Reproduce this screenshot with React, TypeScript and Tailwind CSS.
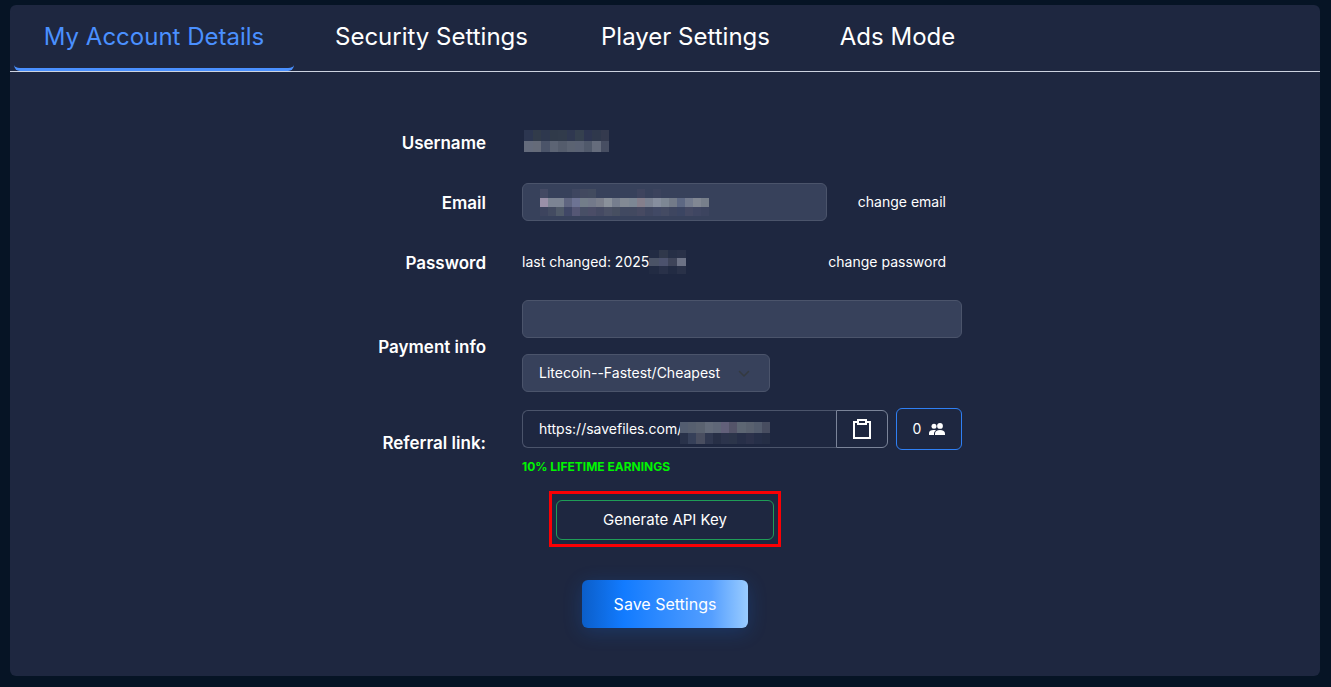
import { useState } from 'react';
import type { ReactNode } from 'react';

const tabs = [
  { name: 'My Account Details', width: 'w-[288px]' },
  { name: 'Security Settings', width: 'w-[267px]' },
  { name: 'Player Settings', width: 'w-[241px]' },
  { name: 'Ads Mode', width: 'w-[183px]' },
];

function Mosaic({ rows, width, cell }: { rows: string[][]; width: string; cell: string }) {
  return (
    <span aria-hidden="true" className={'flex shrink-0 flex-col ' + width}>
      {rows.map((row, y) => (
        <span key={y} className="flex">
          {row.map((color, x) => (
            <span key={x} className={'flex-1 ' + cell} style={{ backgroundColor: color }} />
          ))}
        </span>
      ))}
    </span>
  );
}

const usernameMosaic = [
  '#2c3650 #313b4a #2e384e #303a4a #313b4b #2f3850 #35404f #2d3550 #2f384c #343a4e'.split(' '),
  '#646b7c #656b79 #4b5469 #5c6474 #545c6c #5b6372 #5a6274 #50596b #656c7c #474e62'.split(' '),
];
const emailMosaic = [
  '#434963 #37415b #37415b #37415b #3e4660 #42495f #424b5f #37415b #37415b #37415b #37415b #37415b #3e445e #37415b #3b435d #37415b #37415b #37415b #37415b #37415b #37415b'.split(' '),
  '#9a90a8 #7c8493 #7c8493 #5f6580 #6d7393 #737d89 #73798a #7b7f8c #8a919b #767e8e #828994 #7d8794 #857f8c #7b8292 #868e9e #7d8794 #737b89 #5d6883 #737b8e #818793 #777f8b'.split(' '),
  '#3d445e #434b61 #505a69 #404766 #555775 #484f66 #4b4d67 #454a63 #4b5166 #474f61 #414961 #424960 #474a62 #3f4660 #414965 #444b63 #3e4660 #3b4562 #444963 #3f4662 #3c445f'.split(' '),
];
const dateMosaic = [
  '#222b43 #30384b #262f46 #293148'.split(' '),
  '#4b5366 #4c526d #3e4459 #6c7285'.split(' '),
  '#222b43 #293149 #222b43 #293148'.split(' '),
];
const referralMosaic = [
  '#535d70 #565f6f #5a6270 #636b7a #5f6778 #62607a #545469 #5d6673 #59616f #535c6d #474d60'.split(' '),
  '#29324a #364059 #494e60 #303850 #272f46 #2c344c #2c354a #272f48 #2c324b #262f48 #252e45'.split(' '),
];

function Label({ htmlFor, children }: { htmlFor?: string; children: ReactNode }) {
  return (
    <label htmlFor={htmlFor} className="pt-0.5 text-right text-[17px] leading-6 font-semibold whitespace-nowrap">
      {children}
    </label>
  );
}

export default function App() {
  const [active, setActive] = useState(0);
  return (
    <div className="min-h-screen bg-[#061425] pt-[5px] pr-[11px] pb-[11px] pl-[10px] font-['Inter','Liberation_Sans',sans-serif] text-white">
      <main className="rounded-md bg-[#1e2740] pb-12">
        <nav className="flex border-b border-[#cdd3e0]">
          {tabs.map((tab, i) => (
            <button
              key={tab.name}
              onClick={() => setActive(i)}
              className={
                'relative h-[66px] pb-0.5 text-2xl whitespace-nowrap ' +
                tab.width +
                (i === active ? ' text-[#4a90ff]' : ' text-white')
              }
            >
              {tab.name}
              {i === active && (
                <span className="absolute inset-x-1 bottom-0 h-2 rounded-b-md border-b-3 border-[#4a90ff]" />
              )}
            </button>
          ))}
        </nav>

        <form className="flex flex-col items-center pt-[52px]" onSubmit={(e) => e.preventDefault()}>
          <div className="grid grid-cols-[118px_440px] items-center gap-x-9 text-sm">
            <Label>Username</Label>
            <div className="flex h-9 items-start pt-1.5 pl-0.5">
              <Mosaic rows={usernameMosaic} width="w-[85px]" cell="h-[11px]" />
            </div>

            <Label htmlFor="email">Email</Label>
            <div className="flex h-[84px] items-center justify-between pr-4">
              <div className="flex h-[38px] w-[305px] items-center rounded-md border border-[#4b546b] bg-[#37415b] px-[17px]">
                <Mosaic rows={emailMosaic} width="w-[169px]" cell="h-[9px]" />
                <input id="email" className="w-full min-w-0 bg-transparent outline-none" />
              </div>
              <a href="#email">change email</a>
            </div>

            <Label>Password</Label>
            <div className="flex h-9 items-center justify-between pr-4">
              <span className="flex items-center">
                last changed: 2025
                <Mosaic rows={dateMosaic} width="w-[37px]" cell="h-2" />
              </span>
              <a href="#password">change password</a>
            </div>

            <div className="flex flex-col pt-5">
              <Label htmlFor="payment">Payment info</Label>
            </div>
            <div className="flex flex-col items-start gap-4 pt-5">
              <input
                id="payment"
                className="h-[38px] w-full rounded-md border border-[#4b546b] bg-[#37415b] px-4 outline-none"
              />
              <div className="relative w-[248px]">
                <select
                  aria-label="Payment method"
                  className="h-[38px] w-full appearance-none rounded-md border border-[#4b546b] bg-[#37415b] px-4 outline-none"
                >
                  <option>Litecoin--Fastest/Cheapest</option>
                </select>
                <svg
                  viewBox="0 0 12 8"
                  className="pointer-events-none absolute top-4 right-5 h-2 w-3"
                  fill="none"
                  stroke="#343a40"
                  strokeWidth="1.500"
                >
                  <path d="M1.500 1.500 6 6l4.500-4.500" strokeLinecap="round" strokeLinejoin="round" />
                </svg>
              </div>
            </div>

            <div className="flex flex-col pt-4">
              <Label htmlFor="referral">Referral link:</Label>
            </div>
            <div className="pt-4">
              <div className="flex items-center gap-2">
                <div className="flex h-[38px] flex-1">
                  <div className="flex flex-1 items-center rounded-l-md border border-r-0 border-[#4b546b] pl-4">
                    <input
                      id="referral"
                      readOnly
                      value="https://savefiles.com/"
                      className="w-[141px] bg-transparent outline-none"
                    />
                    <div className="pt-2">
                      <Mosaic rows={referralMosaic} width="w-[90px]" cell="h-[11px]" />
                    </div>
                  </div>
                  <button
                    aria-label="Copy referral link"
                    className="flex w-[52px] items-center justify-center rounded-r-md border border-[#7b8499]"
                  >
                    <svg viewBox="0 0 18 20" className="h-5 w-[18px]" fill="none" stroke="#fff">
                      <path d="M5 3H1v16h16V3h-4" strokeWidth="2" />
                      <path d="M5 1h8v4H5z" strokeWidth="2" />
                    </svg>
                  </button>
                </div>
                <button
                  aria-label="0 referrals"
                  className="flex h-[42px] w-[66px] items-center justify-center gap-2 rounded-md border border-[#2f80f5]"
                >
                  0
                  <svg viewBox="0 0 16 12" className="h-3 w-4" fill="#fff">
                    <circle cx="5" cy="3.3" r="2.5" />
                    <circle cx="11" cy="2.9" r="2.9" />
                    <path d="M0 12V10C0 8 1.800 7 4.500 7c1 0 1.800.1 2.500.4C5.700 8.200 5 9.200 5 10.500V12z" />
                    <path d="M6 12v-1.500C6 8.200 8 7 11 7s5 1.200 5 3.500V12z" />
                  </svg>
                </button>
              </div>
              <p className="pt-2 text-xs leading-[18px] font-bold text-[#00f500]">10% LIFETIME EARNINGS</p>
            </div>
          </div>

          <div className="mt-[15px] border-3 border-[#fb0004] px-1 pt-1.5 pb-1">
            <button className="flex h-10 w-[218px] items-center justify-center rounded-md border border-[#1f9d57] text-[15px]">
              Generate API Key
            </button>
          </div>
          <button className="mt-[33px] h-12 w-[166px] rounded-md bg-[linear-gradient(90deg,#0b5ec9_0%,#127bff_25%,#559fff_78%,#9accff_100%)] text-base shadow-[0_4px_20px_rgba(18,123,255,0.2)]">
            Save Settings
          </button>
        </form>
      </main>
    </div>
  );
}
